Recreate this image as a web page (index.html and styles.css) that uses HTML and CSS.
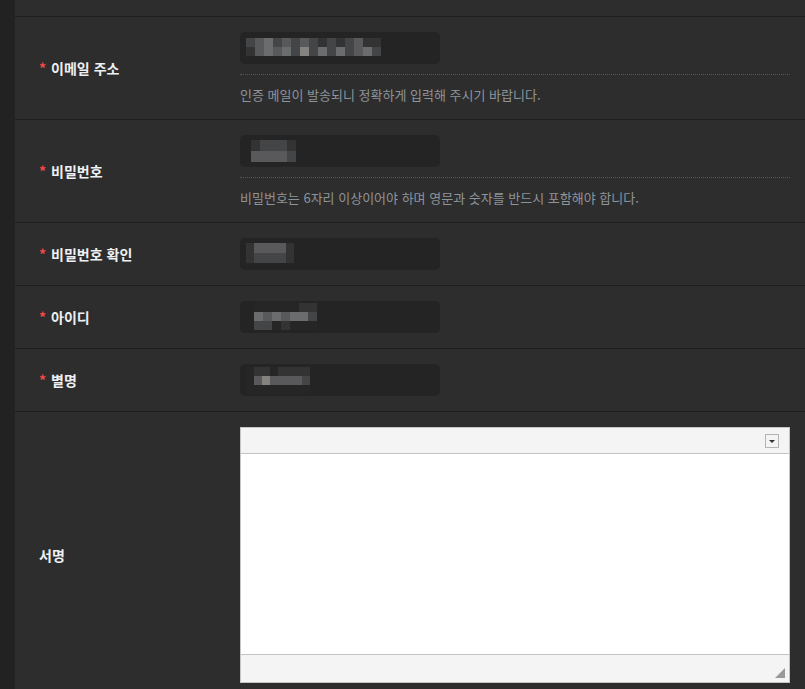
FILE: index.html
```html
<!DOCTYPE html>
<html lang="ko">
<head>
    <meta charset="UTF-8">
    <title>회원가입</title>
    <link rel="stylesheet" href="styles.css">
</head>
<body>
    <div class="page">
        <div class="side-strip"></div>
        <div class="form-area">
            <div class="form-row top-row"></div>

            <div class="form-row">
                <div class="label"><span class="req">*</span> 이메일 주소</div>
                <div class="field">
                    <div class="input-box">
                        <div class="mosaic m-email">
                            <span class="s2"></span><span class="s3"></span><span class="s4"></span><span class="s2"></span><span class="s3"></span><span class="s2"></span><span class="s3"></span><span class="s2"></span><span class="s1"></span><span class="s2"></span><span class="s1"></span><span class="s2"></span><span class="s3"></span><span class="s1"></span><span class="s1"></span>
                            <span class="s1"></span><span class="s3"></span><span class="s4"></span><span class="s3"></span><span class="s4"></span><span class="s2"></span><span class="s5"></span><span class="s2"></span><span class="s4"></span><span class="s2"></span><span class="s4"></span><span class="s2"></span><span class="s3"></span><span class="s4"></span><span class="s2"></span>
                        </div>
                    </div>
                    <div class="help">인증 메일이 발송되니 정확하게 입력해 주시기 바랍니다.</div>
                </div>
            </div>

            <div class="form-row">
                <div class="label"><span class="req">*</span> 비밀번호</div>
                <div class="field">
                    <div class="input-box">
                        <div class="mosaic m-pass">
                            <span class="s1"></span><span class="s2"></span><span class="s2"></span><span class="s2"></span><span class="s1"></span>
                            <span class="s3"></span><span class="s3"></span><span class="s3"></span><span class="s3"></span><span class="s2"></span>
                        </div>
                    </div>
                    <div class="help">비밀번호는 6자리 이상이어야 하며 영문과 숫자를 반드시 포함해야 합니다.</div>
                </div>
            </div>

            <div class="form-row">
                <div class="label"><span class="req">*</span> 비밀번호 확인</div>
                <div class="field">
                    <div class="input-box">
                        <div class="mosaic m-confirm">
                            <span class="s1"></span><span class="s3"></span><span class="s3"></span><span class="s3"></span><span class="s3"></span><span class="s1"></span>
                            <span class="s1"></span><span class="s2"></span><span class="s2"></span><span class="s2"></span><span class="s2"></span><span class="s1"></span>
                        </div>
                    </div>
                </div>
            </div>

            <div class="form-row">
                <div class="label"><span class="req">*</span> 아이디</div>
                <div class="field">
                    <div class="input-box">
                        <div class="mosaic m-id">
                            <span class="s0"></span><span class="s0"></span><span class="s0"></span><span class="s0"></span><span class="s0"></span><span class="s1"></span><span class="s1"></span>
                            <span class="s4"></span><span class="s3"></span><span class="s4"></span><span class="s3"></span><span class="s4"></span><span class="s4"></span><span class="s2"></span>
                            <span class="s2"></span><span class="s2"></span><span class="s0"></span><span class="s1"></span><span class="s0"></span><span class="s0"></span><span class="s0"></span>
                        </div>
                    </div>
                </div>
            </div>

            <div class="form-row">
                <div class="label"><span class="req">*</span> 별명</div>
                <div class="field">
                    <div class="input-box">
                        <div class="mosaic m-nick">
                            <span class="s0"></span><span class="s1"></span><span class="s1"></span><span class="s0"></span><span class="s1"></span><span class="s1"></span><span class="s1"></span><span class="s1"></span>
                            <span class="s0"></span><span class="s3"></span><span class="s5"></span><span class="s3"></span><span class="s3"></span><span class="s3"></span><span class="s3"></span><span class="s2"></span>
                            <span class="s0"></span><span class="s0"></span><span class="s0"></span><span class="s0"></span><span class="s0"></span><span class="s0"></span><span class="s0"></span><span class="s0"></span>
                        </div>
                    </div>
                </div>
            </div>

            <div class="form-row sign-row">
                <div class="label">서명</div>
                <div class="field">
                    <div class="editor">
                        <div class="editor-top">
                            <span class="menu-btn"></span>
                        </div>
                        <div class="editor-body" contenteditable="true"></div>
                        <div class="editor-bottom">
                            <span class="grip"></span>
                        </div>
                    </div>
                </div>
            </div>
        </div>
    </div>
</body>
</html>
```

FILE: styles.css
```css
* {
    margin: 0;
    padding: 0;
    box-sizing: border-box;
}

body {
    font-family: "Noto Sans CJK KR", "Noto Sans", sans-serif;
    background-color: #2d2d2d;
    color: #e8e8e8;
    overflow: hidden;
}

.page {
    display: flex;
    min-height: 100vh;
}

.side-strip {
    width: 15px;
    background-color: #222;
    flex-shrink: 0;
}

.form-area {
    flex: 1;
}

.form-row {
    display: flex;
    border-bottom: 1px solid #1f1f1f;
}

.top-row {
    height: 17px;
}

.label {
    width: 225px;
    flex-shrink: 0;
    padding-left: 24px;
    display: flex;
    align-items: center;
    font-size: 14px;
    font-weight: bold;
    color: #eef0f2;
}

.req {
    color: #f54848;
    margin-right: 5px;
    font-weight: bold;
}

.field {
    flex: 1;
    padding: 15px 15px 15px 0;
}

.input-box {
    width: 200px;
    height: 32px;
    background-color: #242424;
    border-radius: 5px;
    padding: 4px 6px;
}

.help {
    margin-top: 10px;
    border-top: 1px dotted #555;
    padding-top: 11px;
    font-size: 13px;
    line-height: 18px;
    color: #8e949a;
}

/* 개인정보 가림 처리 */
.mosaic {
    display: grid;
    grid-auto-rows: 9px;
}

.mosaic span {
    display: block;
}

.m-email {
    grid-template-columns: repeat(15, 9px);
    margin-top: 2px;
}

.m-pass {
    grid-template-columns: repeat(5, 9px);
    margin: 1px 0 0 5px;
    grid-auto-rows: 11px;
}

.m-confirm {
    grid-template-columns: repeat(6, 8px);
    margin: 1px 0 0 0;
    grid-auto-rows: 10px;
}

.m-id {
    grid-template-columns: repeat(7, 9px);
    margin: -2px 0 0 8px;
}

.m-nick {
    grid-template-columns: repeat(8, 8px);
    margin: -1px 0 0 0;
}

.s0 { background-color: #262626; }
.s1 { background-color: #333; }
.s2 { background-color: #444547; }
.s3 { background-color: #59595b; }
.s4 { background-color: #6a6c6e; }
.s5 { background-color: #85837f; }

.sign-row .label {
    padding-top: 8px;
}

.sign-row .field {
    padding: 15px 15px 6px 0;
}

.editor {
    border: 1px solid #c4c4c4;
    background-color: #fff;
    display: flex;
    flex-direction: column;
    height: 256px;
}

.editor-top {
    height: 26px;
    background-color: #f3f4f3;
    border-bottom: 1px solid #c4c4c4;
    display: flex;
    justify-content: flex-end;
    align-items: center;
    padding-right: 10px;
}

.menu-btn {
    width: 14px;
    height: 14px;
    border: 1px solid #b4b4b4;
    position: relative;
}

.menu-btn::after {
    content: "";
    position: absolute;
    left: 3px;
    top: 5px;
    border-left: 3px solid transparent;
    border-right: 3px solid transparent;
    border-top: 3px solid #333;
}

.editor-body {
    flex: 1;
    background-color: #fff;
    outline: none;
}

.editor-bottom {
    height: 28px;
    background-color: #f3f4f3;
    border-top: 1px solid #c4c4c4;
    position: relative;
}

.grip {
    position: absolute;
    right: 4px;
    bottom: 4px;
    width: 0;
    height: 0;
    border-left: 10px solid transparent;
    border-bottom: 10px solid #999;
}
```
